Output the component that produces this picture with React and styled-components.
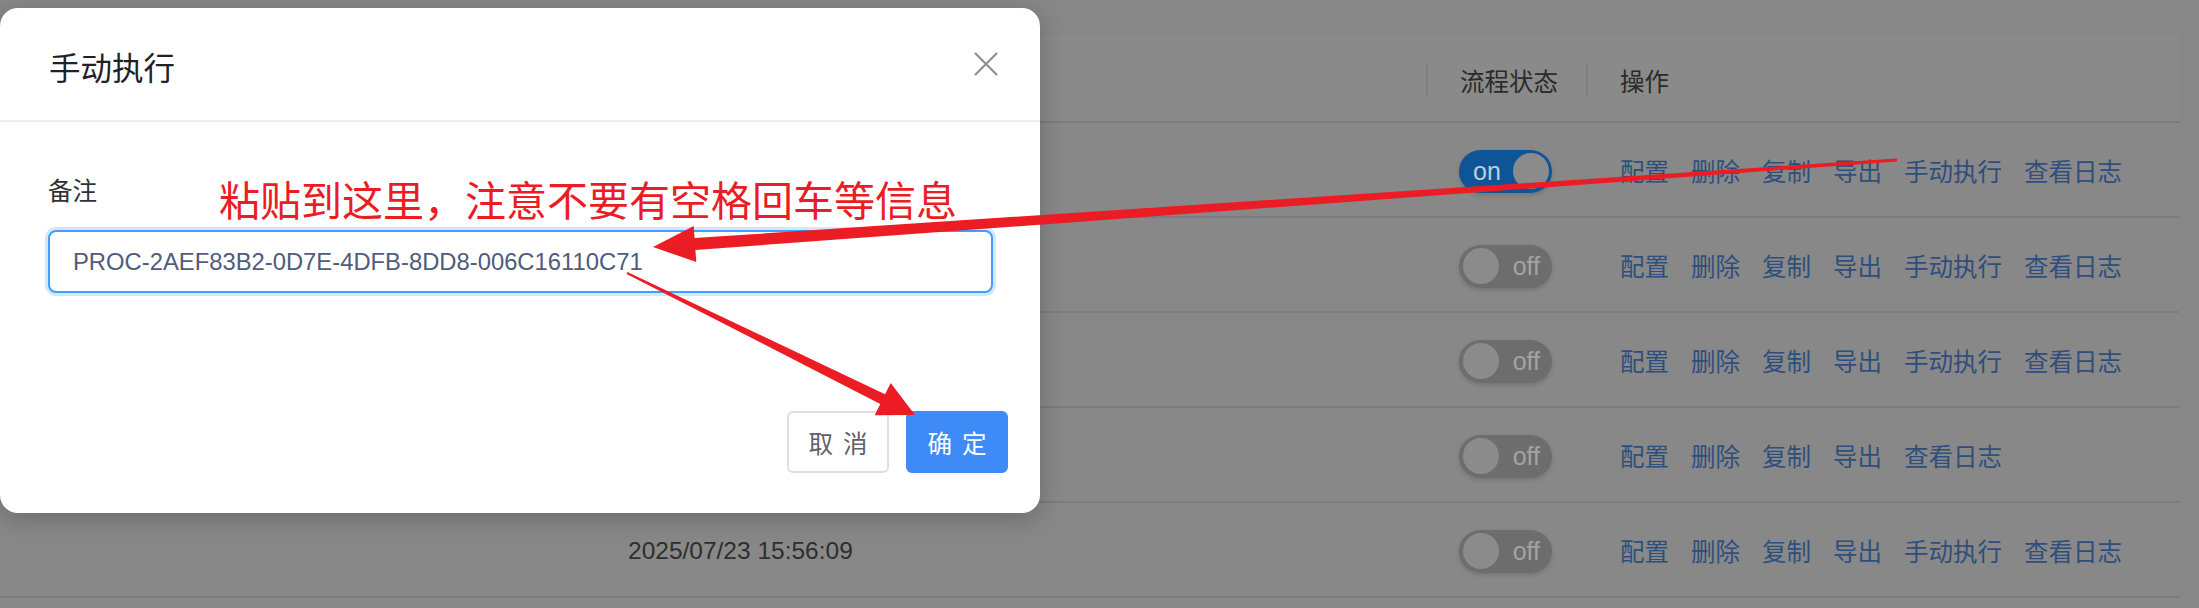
import React from "react";
import styled, { createGlobalStyle } from "styled-components";

const GlobalStyle = createGlobalStyle`
  html, body {
    margin: 0;
    padding: 0;
  }
  body {
    width: 2199px;
    height: 608px;
    overflow: hidden;
    background: #878787;
    font-family: "Noto Sans CJK SC", "Liberation Sans", sans-serif;
  }
`;

const Page = styled.div`
  position: relative;
  width: 2199px;
  height: 608px;
  box-sizing: border-box;
  padding: 35px 20px 0 0;
  overflow: hidden;
`;

const Table = styled.div`
  background: #888888;
`;

const HeaderRow = styled.div`
  display: grid;
  grid-template-columns: 600px 826px 160px 1fr;
  height: 88px;
  box-sizing: border-box;
  background: #8a8a8a;
  border-bottom: 2px solid #7b7b84;
`;

const HeadCell = styled.div`
  position: relative;
  display: flex;
  align-items: center;
  padding: 6px 0 0 34px;
  font-size: 24.5px;
  line-height: 34px;
  color: #2b2b2b;

  & + &::before {
    content: "";
    position: absolute;
    left: 0;
    top: 28px;
    width: 2px;
    height: 33px;
    background: #7e7e85;
  }
`;

const Row = styled.div`
  display: grid;
  grid-template-columns: 600px 826px 160px 1fr;
  height: 95px;
  box-sizing: border-box;
  border-bottom: 2px solid #7b7b84;
`;

const Cell = styled.div`
  display: flex;
  align-items: center;
  padding: 3px 0 0 ${(p) => p.$pad ?? 34}px;
`;

const DateText = styled.span`
  font-family: "Liberation Sans", sans-serif;
  font-size: 24.5px;
  color: #2f2f2f;
`;

const Switch = styled.span`
  display: inline-flex;
  align-items: center;
  justify-content: space-between;
  width: 93px;
  height: 43px;
  box-sizing: border-box;
  padding: ${(p) => (p.$on ? "0 3.5px 0 14px" : "0 12px 0 3.5px")};
  border-radius: 22px;
  background: ${(p) => (p.$on ? "#0e5598" : "#6d6d6d")};
  box-shadow: 0 2px 4px rgba(0, 0, 0, 0.15);
`;

const SwitchText = styled.span`
  font-family: "Liberation Sans", sans-serif;
  font-size: 25px;
  line-height: 30px;
  color: ${(p) => (p.$on ? "#c3cddb" : "#a3a3a3")};
`;

const Knob = styled.span`
  width: 36px;
  height: 36px;
  border-radius: 50%;
  background: #8b8b8b;
`;

const Actions = styled.div`
  display: flex;
  gap: 22px;
`;

const ActionLink = styled.a`
  font-size: 24.5px;
  line-height: 34px;
  color: #2e4f7d;
  text-decoration: none;
  cursor: pointer;
`;

const Dialog = styled.div`
  position: absolute;
  top: 8px;
  left: 0;
  width: 1040px;
  height: 505px;
  display: flex;
  flex-direction: column;
  background: #fff;
  border-radius: 18px;
  box-shadow: 0 6px 26px rgba(0, 0, 0, 0.22);
  z-index: 2;
`;

const DialogHeader = styled.div`
  display: flex;
  align-items: center;
  justify-content: space-between;
  height: 114px;
  box-sizing: border-box;
  padding: 4px 42px 0 49px;
  border-bottom: 2px solid #ededed;
`;

const Title = styled.span`
  font-size: 31.5px;
  line-height: 44px;
  color: #1f2228;
`;

const CloseButton = styled.span`
  display: flex;
  margin-bottom: 4px;
  cursor: pointer;
`;

const DialogBody = styled.div`
  display: flex;
  flex-direction: column;
  padding: 51px 47px 0 48px;
`;

const Label = styled.label`
  font-size: 24.5px;
  line-height: 34px;
  color: #303133;
  margin-bottom: 23px;
`;

const Input = styled.input`
  height: 63px;
  box-sizing: border-box;
  padding: 0 23px;
  border: 2px solid #409eff;
  border-radius: 8px;
  box-shadow: 0 0 0 3px #d3e8fe;
  outline: none;
  font-family: "Liberation Sans", sans-serif;
  font-size: 23.8px;
  color: #4f5c7b;
`;

const DialogFooter = styled.div`
  display: flex;
  justify-content: flex-end;
  gap: 17px;
  margin-top: auto;
  padding: 0 32px 40px 0;
`;

const Button = styled.button`
  width: 102px;
  height: 62px;
  box-sizing: border-box;
  border-radius: 6px;
  border: 2px solid ${(p) => (p.$primary ? "#3e8bf7" : "#dcdfe6")};
  background: ${(p) => (p.$primary ? "#3e8bf7" : "#fff")};
  color: ${(p) => (p.$primary ? "#fff" : "#606266")};
  font-family: "Noto Sans CJK SC", sans-serif;
  font-size: 24.5px;
  letter-spacing: 10px;
  text-indent: 10px;
  padding: 0;
  cursor: pointer;
`;

const Annotation = styled.div`
  position: absolute;
  inset: 0;
  pointer-events: none;
  z-index: 5;
`;

const Note = styled.span`
  position: absolute;
  left: 219px;
  top: 178px;
  font-size: 41px;
  line-height: 41px;
  color: #ec1c24;
  white-space: nowrap;
`;

const ArrowLayer = styled.svg`
  position: absolute;
  left: 0;
  top: 0;
`;

// rows 1-4 lie under the dialog, only the last date shows
const rows = [
  { on: true, run: true, date: "" },
  { on: false, run: true, date: "" },
  { on: false, run: true, date: "" },
  { on: false, run: false, date: "" },
  { on: false, run: true, date: "2025/07/23 15:56:09" },
];

function Toggle({ on }) {
  return (
    <Switch $on={on}>
      {on ? (
        <>
          <SwitchText $on>on</SwitchText>
          <Knob />
        </>
      ) : (
        <>
          <Knob />
          <SwitchText>off</SwitchText>
        </>
      )}
    </Switch>
  );
}

export default function App() {
  return (
    <>
      <GlobalStyle />
      <Page>
        <Table>
          <HeaderRow>
            <HeadCell />
            <HeadCell />
            <HeadCell>流程状态</HeadCell>
            <HeadCell>操作</HeadCell>
          </HeaderRow>
          {rows.map((r, i) => (
            <Row key={i}>
              <Cell />
              <Cell $pad={28}>
                <DateText>{r.date}</DateText>
              </Cell>
              <Cell $pad={33}>
                <Toggle on={r.on} />
              </Cell>
              <Cell>
                <Actions>
                  <ActionLink>配置</ActionLink>
                  <ActionLink>删除</ActionLink>
                  <ActionLink>复制</ActionLink>
                  <ActionLink>导出</ActionLink>
                  {r.run && <ActionLink>手动执行</ActionLink>}
                  <ActionLink>查看日志</ActionLink>
                </Actions>
              </Cell>
            </Row>
          ))}
        </Table>

        <Dialog>
          <DialogHeader>
            <Title>手动执行</Title>
            <CloseButton>
              <svg width="24" height="24" viewBox="0 0 24 24">
                <path d="M1 1 L23 23 M23 1 L1 23" stroke="#8c8c8c" strokeWidth="2" fill="none" />
              </svg>
            </CloseButton>
          </DialogHeader>
          <DialogBody>
            <Label>备注</Label>
            <Input readOnly defaultValue="PROC-2AEF83B2-0D7E-4DFB-8DD8-006C16110C71" />
          </DialogBody>
          <DialogFooter>
            <Button>取消</Button>
            <Button $primary>确定</Button>
          </DialogFooter>
        </Dialog>

        <Annotation>
          <Note>粘贴到这里，注意不要有空格回车等信息</Note>
          <ArrowLayer width="2199" height="608" viewBox="0 0 2199 608">
            <polygon
              fill="#ec1c24"
              points="1896.9,158.5 694.6,238 693.7,226 653,247 696.3,262 695.4,250 1897.1,161.5"
            />
            <polygon
              fill="#ec1c24"
              points="627.4,272.1 885.1,394.2 890.7,383 915,415 874.7,415.2 880.3,404 626.6,273.9"
            />
          </ArrowLayer>
        </Annotation>
      </Page>
    </>
  );
}
